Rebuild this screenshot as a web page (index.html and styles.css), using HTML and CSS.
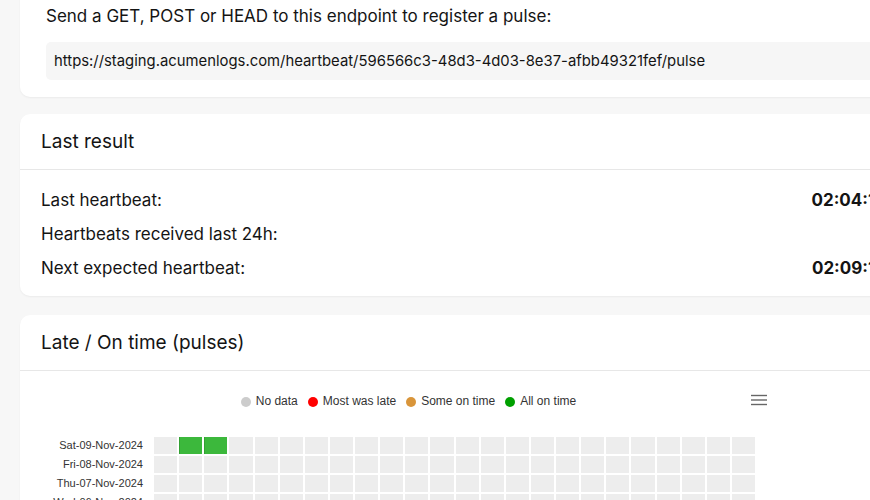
FILE: index.html
```html
<!DOCTYPE html>
<html lang="en">
<head>
<meta charset="utf-8">
<title>Heartbeat</title>
<link rel="stylesheet" href="styles.css">
</head>
<body>
<main class="page">
  <section class="card card-endpoint">
    <p class="lead">Send a GET, POST or HEAD to this endpoint to register a pulse:</p>
    <div class="url-box">https://staging.acumenlogs.com/heartbeat/596566c3-48d3-4d03-8e37-afbb49321fef/pulse</div>
  </section>

  <section class="card">
    <header class="card-header"><h2>Last result</h2></header>
    <div class="card-body stats">
      <div class="stat-row"><span>Last heartbeat:</span><strong>02:04:12</strong></div>
      <div class="stat-row"><span>Heartbeats received last 24h:</span><strong></strong></div>
      <div class="stat-row"><span>Next expected heartbeat:</span><strong>02:09:12</strong></div>
    </div>
  </section>

  <section class="card card-chart">
    <header class="card-header"><h2>Late / On time (pulses)</h2></header>
    <div class="card-body chart-body">
      <div class="chart">
        <div class="legend">
          <span class="legend-item"><i class="dot dot-none"></i>No data</span>
          <span class="legend-item"><i class="dot dot-late"></i>Most was late</span>
          <span class="legend-item"><i class="dot dot-some"></i>Some on time</span>
          <span class="legend-item"><i class="dot dot-all"></i>All on time</span>
        </div>
        <button class="menu-btn" aria-label="Chart menu">
          <svg width="16" height="12" viewBox="0 0 16 12"><g stroke="#666" stroke-width="1.4"><line x1="0" y1="1.5" x2="16" y2="1.5"/><line x1="0" y1="6" x2="16" y2="6"/><line x1="0" y1="10.5" x2="16" y2="10.5"/></g></svg>
        </button>
        <div class="heatmap" id="heatmap">
          <div class="day">Sat-09-Nov-2024</div>
          <div class="cells">
            <span></span><span class="on"></span><span class="on"></span><span></span><span></span><span></span><span></span><span></span><span></span><span></span><span></span><span></span><span></span><span></span><span></span><span></span><span></span><span></span><span></span><span></span><span></span><span></span><span></span><span></span>
          </div>
          <div class="day">Fri-08-Nov-2024</div>
          <div class="cells">
            <span></span><span></span><span></span><span></span><span></span><span></span><span></span><span></span><span></span><span></span><span></span><span></span><span></span><span></span><span></span><span></span><span></span><span></span><span></span><span></span><span></span><span></span><span></span><span></span>
          </div>
          <div class="day">Thu-07-Nov-2024</div>
          <div class="cells">
            <span></span><span></span><span></span><span></span><span></span><span></span><span></span><span></span><span></span><span></span><span></span><span></span><span></span><span></span><span></span><span></span><span></span><span></span><span></span><span></span><span></span><span></span><span></span><span></span>
          </div>
          <div class="day">Wed-06-Nov-2024</div>
          <div class="cells">
            <span></span><span></span><span></span><span></span><span></span><span></span><span></span><span></span><span></span><span></span><span></span><span></span><span></span><span></span><span></span><span></span><span></span><span></span><span></span><span></span><span></span><span></span><span></span><span></span>
          </div>
          <div class="day">Tue-05-Nov-2024</div>
          <div class="cells">
            <span></span><span></span><span></span><span></span><span></span><span></span><span></span><span></span><span></span><span></span><span></span><span></span><span></span><span></span><span></span><span></span><span></span><span></span><span></span><span></span><span></span><span></span><span></span><span></span>
          </div>
        </div>
      </div>
    </div>
  </section>
</main>
</body>
</html>
```

FILE: styles.css
```css
* { box-sizing: border-box; }

html, body {
  margin: 0;
  padding: 0;
  background: #f7f7f7;
  overflow: hidden;
  height: 500px;
}

body {
  font-family: Inter, "Noto Sans", sans-serif;
  color: #141414;
}

.page {
  display: flex;
  flex-direction: column;
  gap: 17px;
  padding-left: 20px;
  margin-top: -19px;
  width: 907px;
}

.card {
  background: #fff;
  border-radius: 10px;
  box-shadow: 0 1px 2px rgba(0, 0, 0, 0.05);
}

.card-chart {
  margin-top: 2px;
}

.card-endpoint {
  padding: 25px 0 17px 26px;
}

.lead {
  margin: 0;
  font-size: 17px;
  line-height: 21px;
}

.url-box {
  margin-top: 15px;
  height: 38px;
  display: flex;
  align-items: center;
  padding-left: 8px;
  background: #f6f6f6;
  border-radius: 5px 0 0 5px;
  font-size: 14.85px;
}

.card-header {
  height: 56px;
  display: flex;
  align-items: center;
  padding: 0 21px;
  border-bottom: 1px solid #e7e7e7;
}

.card-header h2 {
  margin: 0;
  font-size: 19px;
  font-weight: 400;
}

.stats {
  padding: 13px 21px 11px 21px;
}

.stat-row {
  height: 34px;
  display: flex;
  align-items: center;
  justify-content: space-between;
  font-size: 17px;
}

.stat-row strong {
  font-weight: 700;
}

.chart-body {
  padding: 0 0 0 21px;
}

.chart {
  position: relative;
  width: 735px;
  font-family: "Liberation Sans", Arial, sans-serif;
}

.legend {
  display: flex;
  justify-content: center;
  gap: 10px;
  padding-top: 22px;
  height: 66px;
  font-size: 12px;
  color: #333;
}

.legend-item {
  display: flex;
  align-items: center;
  gap: 5px;
  height: 16px;
}

.dot {
  width: 10px;
  height: 10px;
  border-radius: 50%;
  display: inline-block;
  margin-top: 2px;
}

.dot-none { background: #cccccc; }
.dot-late { background: #ff0000; }
.dot-some { background: #d9953a; }
.dot-all  { background: #00a000; }

.menu-btn {
  position: absolute;
  top: 23px;
  right: 9px;
  border: 0;
  background: none;
  padding: 0;
  width: 16px;
  height: 12px;
  display: block;
}

.menu-btn svg { display: block; }

.heatmap {
  display: grid;
  grid-template-columns: 102px 601px;
  column-gap: 11px;
  row-gap: 2px;
  align-items: center;
}

.day {
  text-align: right;
  font-size: 11px;
  color: #333;
  line-height: 17px;
}

.cells {
  display: grid;
  grid-template-columns: repeat(24, 1fr);
  gap: 2px;
}

.cells span {
  height: 17px;
  background: #ededed;
}

.cells span.on {
  background: #3cb83c;
  box-shadow: inset 1px 0 0 #33a033;
}
```
